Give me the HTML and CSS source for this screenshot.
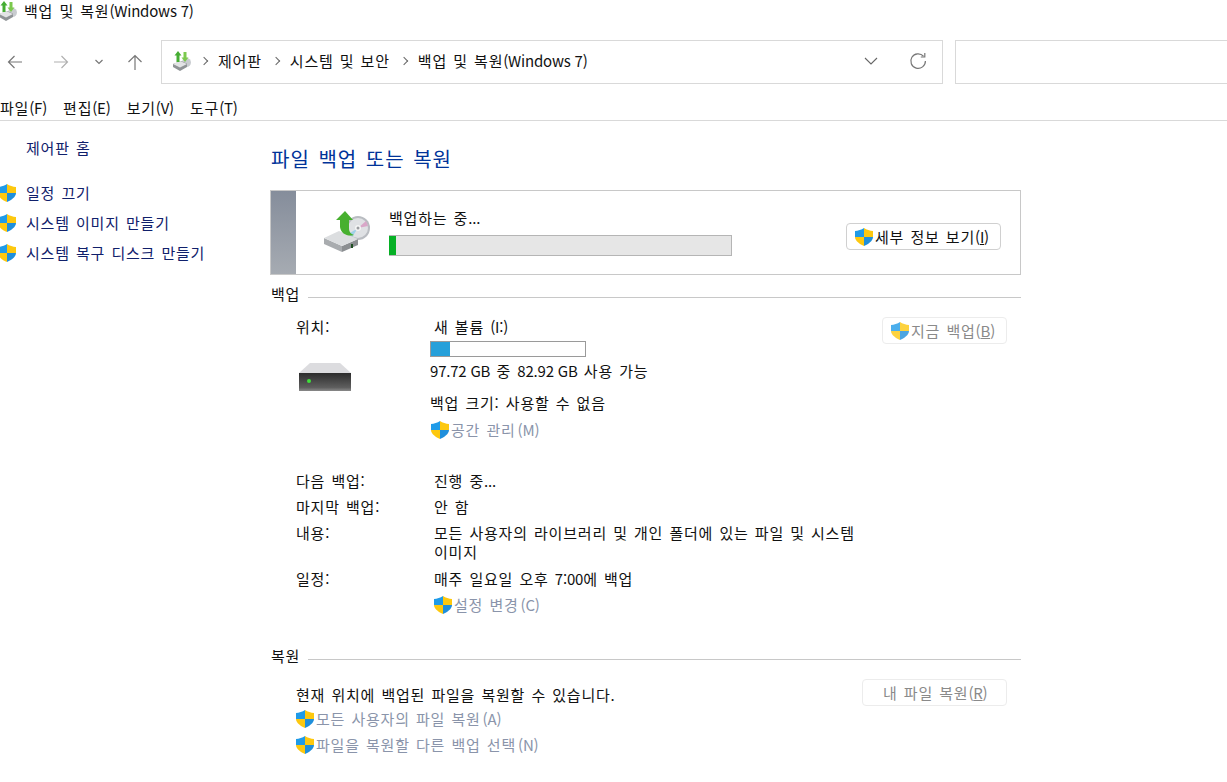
FILE: index.html
```html
<!DOCTYPE html>
<html lang="ko">
<head>
    <meta charset="UTF-8">
    <title>백업 및 복원(Windows 7)</title>
    <link rel="stylesheet" href="styles.css">
</head>
<body>
    <svg class="defs" aria-hidden="true">
        <symbol id="shield" viewBox="0 0 18 18">
            <path fill="#1f9be8" d="M9 0C6.500 1.800 3 2.800 0 3V9H9Z"/>
            <path fill="#fdc80f" d="M9 0C11.500 1.800 15 2.800 18 3V9H9Z"/>
            <path fill="#fdc80f" d="M0 9C0 13 5 16.300 9 18V9Z"/>
            <path fill="#1f8fdc" d="M18 9C18 13 13 16.300 9 18V9Z"/>
        </symbol>
        <symbol id="backup-small" viewBox="0 0 20 20">
            <circle cx="14.500" cy="11.500" r="4.500" fill="#c9ccd0"/>
            <path fill="#8f9396" d="M1 13L9 10L15 12.500V16L8 20L1 16Z"/>
            <path fill="#e2e3e5" d="M1 13L8 10L15 13L8 16.500Z"/>
            <path fill="#45ad33" d="M6 0L9.500 4.500H7.500V11H4.500V4.500H2.500Z"/>
            <path fill="#7cc94e" d="M13 11L9.500 6.500H11.500V1H14.500V6.500H16.500Z"/>
        </symbol>
    </svg>

    <div class="titlebar">
        <svg class="app-icon" width="20" height="20"><use href="#backup-small"/></svg>
        <span>백업 및 복원<span class="en">(Windows 7)</span></span>
    </div>

    <div class="navbar">
        <div class="nav-buttons">
            <svg class="nav-back" width="16" height="16" viewBox="0 0 16 16"><path fill="none" stroke="#777" stroke-width="1.200" d="M15 8H1.500M7.500 2L1.500 8L7.500 14"/></svg>
            <svg class="nav-forward" width="16" height="16" viewBox="0 0 16 16"><path fill="none" stroke="#b0b0b0" stroke-width="1.200" d="M1 8H14.500M8.500 2L14.500 8L8.500 14"/></svg>
            <svg class="nav-recent" width="10" height="6" viewBox="0 0 10 6"><path fill="none" stroke="#777" stroke-width="1.200" d="M1.500 1L5 4.500L8.500 1"/></svg>
            <svg class="nav-up" width="16" height="16" viewBox="0 0 16 16"><path fill="none" stroke="#777" stroke-width="1.200" d="M8 16V1.500M1.500 8L8 1.500L14.500 8"/></svg>
        </div>
        <div class="address">
            <svg class="address-icon" width="20" height="20"><use href="#backup-small"/></svg>
            <span class="crumb-sep"></span>
            <span>제어판</span>
            <span class="crumb-sep"></span>
            <span>시스템 및 보안</span>
            <span class="crumb-sep"></span>
            <span>백업 및 복원<span class="en">(Windows 7)</span></span>
            <svg class="address-drop" width="14" height="8" viewBox="0 0 14 8"><path fill="none" stroke="#666" stroke-width="1.100" d="M1 1L7 7L13 1"/></svg>
            <svg class="address-refresh" width="18" height="18" viewBox="0 0 18 18"><path fill="none" stroke="#777" stroke-width="1.200" d="M14.500 4.200A7.300 7.300 0 1 0 16.400 9M15.800 1V5H11.800"/></svg>
        </div>
        <div class="search"></div>
    </div>

    <div class="menubar">
        <span>파일<span class="en">(F)</span></span>
        <span>편집<span class="en">(E)</span></span>
        <span>보기<span class="en">(V)</span></span>
        <span>도구<span class="en">(T)</span></span>
    </div>

    <div class="page">
        <div class="sidebar">
            <div class="side-home">제어판 홈</div>
            <div class="side-link"><svg class="shield"><use href="#shield"/></svg>일정 끄기</div>
            <div class="side-link"><svg class="shield"><use href="#shield"/></svg>시스템 이미지 만들기</div>
            <div class="side-link"><svg class="shield"><use href="#shield"/></svg>시스템 복구 디스크 만들기</div>
        </div>

        <div class="main">
            <h1>파일 백업 또는 복원</h1>

            <div class="status">
                <div class="status-strip"></div>
                <svg class="status-icon" width="48" height="44" viewBox="0 0 48 44">
                    <circle cx="36" cy="20" r="12" fill="#b9bcc1"/>
                    <circle cx="36" cy="20" r="10" fill="#dfe1e4"/>
                    <path fill="#d9a7c8" d="M36 20L44 13L46 18Z"/>
                    <path fill="#9fd0e8" d="M36 20L28 25L30 29Z"/>
                    <circle cx="36" cy="20" r="3" fill="#f5f5f5"/>
                    <circle cx="36" cy="20" r="1.500" fill="#9a9da1"/>
                    <path fill="#a9acaf" d="M2 30L20 38V44L2 36Z"/>
                    <path fill="#8c8f92" d="M20 38L36 31V37L20 44Z"/>
                    <path fill="#dcdee0" d="M2 30L17 23L36 31L20 38Z"/>
                    <rect x="29" y="36" width="2" height="4" fill="#1f4f22"/>
                    <path fill="#47b02f" d="M23 3L31 12H27V20C27 24 29 26 32 27C26 29 19 26 18 19V12H14Z"/>
                </svg>
                <div class="status-progress">
                    <div>백업하는 중<span class="en">...</span></div>
                    <div class="progress"><div class="progress-fill"></div></div>
                </div>
                <div class="button button-details"><svg class="shield"><use href="#shield"/></svg>세부 정보 보기<span class="en">(<u>I</u>)</span></div>
            </div>

            <div class="section-head"><span>백업</span><i></i></div>
            <div class="section-body">
                <div class="location">
                    <div class="location-side">
                        <div>위치:</div>
                        <svg class="drive" width="54" height="30" viewBox="0 0 54 30">
                            <defs><linearGradient id="driveface" x1="0" y1="0" x2="0" y2="1"><stop offset="0" stop-color="#2c2c2c"/><stop offset="0.8" stop-color="#5e5e5e"/><stop offset="1" stop-color="#8a8a8a"/></linearGradient></defs>
                            <path fill="#dcdcdf" d="M1 12L12 2H42L53 12Z"/>
                            <rect x="1" y="12" width="52" height="18" fill="url(#driveface)"/>
                            <circle cx="11" cy="20" r="2" fill="#3fe03a"/>
                        </svg>
                    </div>
                    <div class="location-info">
                        <div class="volume">새 볼륨 <span class="en">(I:)</span></div>
                        <div class="meter"><div class="meter-fill"></div></div>
                        <div class="free"><span class="en">97.72 GB</span> 중 <span class="en">82.92 GB</span> 사용 가능</div>
                        <div class="size">백업 크기: 사용할 수 없음</div>
                        <div class="link-row"><svg class="shield"><use href="#shield"/></svg>공간 관리<span class="en">(M)</span></div>
                    </div>
                    <div class="button button-off button-backup"><svg class="shield"><use href="#shield"/></svg>지금 백업<span class="en">(<u>B</u>)</span></div>
                </div>

                <div class="facts">
                    <div>다음 백업:</div><div>진행 중<span class="en">...</span></div>
                    <div>마지막 백업:</div><div>안 함</div>
                    <div>내용:</div><div class="fact-long">모든 사용자의 라이브러리 및 개인 폴더에 있는 파일 및 시스템 이미지</div>
                    <div>일정:</div><div>매주 일요일 오후 <span class="en">7:00</span>에 백업</div>
                    <div></div><div class="link-row"><svg class="shield"><use href="#shield"/></svg>설정 변경<span class="en">(C)</span></div>
                </div>
            </div>

            <div class="section-head section-restore"><span>복원</span><i></i></div>
            <div class="restore">
                <div class="restore-text">
                    <div class="restore-note">현재 위치에 백업된 파일을 복원할 수 있습니다.</div>
                    <div class="link-row"><svg class="shield"><use href="#shield"/></svg>모든 사용자의 파일 복원<span class="en">(A)</span></div>
                    <div class="link-row"><svg class="shield"><use href="#shield"/></svg>파일을 복원할 다른 백업 선택<span class="en">(N)</span></div>
                </div>
                <div class="button button-off button-restore">내 파일 복원<span class="en">(<u>R</u>)</span></div>
            </div>
        </div>
    </div>
</body>
</html>
```

FILE: styles.css
```css
html, body {
    height: 100%;
}
body {
    margin: 0;
    background-color: #fff;
    color: #111;
    font-family: "Noto Sans CJK KR", "Noto Sans", sans-serif;
    font-size: 15px;
    line-height: 20px;
    letter-spacing: 0.8px;
    word-spacing: 1.2px;
    word-break: keep-all;
    overflow: hidden;
}
.en {
    letter-spacing: -0.2px;
    word-spacing: 0;
}
.defs {
    display: none;
}
.shield {
    flex: none;
    width: 18px;
    height: 18px;
}
.titlebar {
    display: flex;
    align-items: center;
    gap: 6px;
    height: 22px;
}
.app-icon {
    margin-left: -2px;
}
.navbar {
    display: flex;
    align-items: stretch;
    height: 44px;
    margin-top: 18px;
}
.nav-buttons {
    display: flex;
    align-items: center;
    flex: none;
    width: 161px;
    padding-left: 7px;
    box-sizing: border-box;
}
.nav-forward {
    margin-left: 30px;
}
.nav-recent {
    margin-left: 25px;
}
.nav-up {
    margin-left: 23px;
}
.address {
    display: flex;
    align-items: center;
    flex: none;
    width: 782px;
    box-sizing: border-box;
    padding: 0 0 2px 10px;
    border: 1px solid #d9d9d9;
}
.address-icon {
    margin-right: -2px;
}
.crumb-sep {
    width: 5px;
    height: 5px;
    margin: 0 11px;
    border-top: 1px solid #666;
    border-right: 1px solid #666;
    transform: rotate(45deg);
}
.address-drop {
    margin-left: auto;
}
.address-refresh {
    margin: 0 15px 0 31px;
}
.search {
    flex: none;
    width: 300px;
    margin-left: 12px;
    border: 1px solid #d9d9d9;
}
.menubar {
    display: flex;
    gap: 16px;
    height: 24px;
    margin-top: 12px;
    border-bottom: 1px solid #d9d9d9;
    line-height: 24px;
}
.page {
    display: flex;
}
.sidebar {
    flex: none;
    width: 271px;
    padding-top: 17px;
    box-sizing: border-box;
    color: #10206b;
}
.side-home {
    margin-left: 26px;
    margin-bottom: 20px;
}
.side-link {
    display: flex;
    align-items: center;
    gap: 10px;
    height: 30px;
    margin-left: -2px;
}
.main {
    flex: none;
    width: 750px;
}
.main h1 {
    margin: 25px 0 18px;
    color: #003399;
    font-size: 20px;
    font-weight: 400;
    line-height: 26px;
    letter-spacing: 1px;
    word-spacing: 2px;
}
.status {
    display: flex;
    align-items: center;
    height: 85px;
    box-sizing: border-box;
    border: 1px solid #c8c8c8;
    margin-left: -1px;
}
.status-strip {
    align-self: stretch;
    width: 25px;
    background: linear-gradient(#858d9b, #a6abb2);
}
.status-icon {
    margin-left: 26px;
    margin-top: -6px;
}
.status-progress {
    margin-left: 19px;
    margin-top: -2px;
}
.progress {
    width: 343px;
    height: 21px;
    margin-top: 7px;
    box-sizing: border-box;
    border-top: 1px solid #b5b5b5;
    border-bottom: 1px solid #b5b5b5;
    border-right: 1px solid #b5b5b5;
    background-color: #e6e6e6;
}
.progress-fill {
    width: 7px;
    height: 100%;
    background-color: #06b025;
}
.button {
    display: flex;
    align-items: center;
    box-sizing: border-box;
    height: 27px;
    padding-left: 8px;
    border: 1px solid #d0d0d0;
    border-radius: 4px;
    white-space: nowrap;
}
.button .shield {
    margin-right: 2px;
}
.button-details {
    width: 155px;
    margin-left: 114px;
    margin-top: 8px;
}
.button-off {
    border-color: #ececec;
    color: #8a8a8a;
}
.button-off .shield {
    opacity: 0.8;
}
.section-head {
    display: flex;
    align-items: center;
    margin-top: 9px;
    height: 20px;
}
.section-head i {
    flex: 1;
    height: 1px;
    margin-left: 8px;
    margin-top: 6px;
    background-color: #c8c8c8;
}
.section-body {
    padding-left: 25px;
}
.location {
    display: flex;
    margin-top: 13px;
}
.location-side {
    flex: none;
    width: 134px;
}
.drive {
    display: block;
    margin: 24px 0 0 2px;
}
.location-info {
    flex: none;
    width: 452px;
}
.volume {
    margin-left: 4px;
}
.meter {
    width: 156px;
    height: 16px;
    margin-top: 4px;
    box-sizing: border-box;
    border: 1px solid #9a9a9a;
}
.meter-fill {
    width: 19px;
    height: 100%;
    background-color: #26a0da;
}
.free {
    margin-top: 4px;
}
.size {
    margin-top: 12px;
}
.link-row {
    display: flex;
    align-items: center;
    gap: 2px;
    color: #8a94aa;
    height: 26px;
}
.location .link-row {
    margin: 4px 0 0 1px;
}
.button-backup {
    width: 125px;
}
.facts {
    display: grid;
    grid-template-columns: 138px 440px;
    row-gap: 6px;
    margin-top: 28px;
}
.fact-long {
    margin-bottom: 2px;
    line-height: 19px;
}
.facts .link-row {
    margin-top: -3px;
}
.section-restore {
    margin-top: 28px;
}
.restore {
    display: flex;
    justify-content: space-between;
    width: 711px;
    padding-left: 25px;
    margin-top: 13px;
}
.restore-note {
    margin: 6px 0 1px;
}
.button-restore {
    width: 145px;
    padding-left: 20px;
}
```
